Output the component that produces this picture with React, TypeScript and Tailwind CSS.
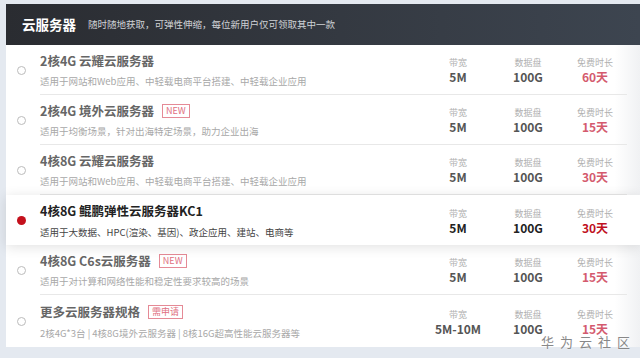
import React from 'react';

interface Plan {
  title: string;
  tag?: string;
  desc: string;
  bw: string;
  disk: string;
  days: string;
  active?: boolean;
}

const plans: Plan[] = [
  { title: '2核4G 云耀云服务器', desc: '适用于网站和Web应用、中轻载电商平台搭建、中轻载企业应用', bw: '5M', disk: '100G', days: '60天' },
  { title: '2核4G 境外云服务器', tag: 'NEW', desc: '适用于均衡场景，针对出海特定场景，助力企业出海', bw: '5M', disk: '100G', days: '15天' },
  { title: '4核8G 云耀云服务器', desc: '适用于网站和Web应用、中轻载电商平台搭建、中轻载企业应用', bw: '5M', disk: '100G', days: '30天' },
  { title: '4核8G 鲲鹏弹性云服务器KC1', desc: '适用于大数据、HPC(渲染、基因)、政企应用、建站、电商等', bw: '5M', disk: '100G', days: '30天', active: true },
  { title: '4核8G C6s云服务器', tag: 'NEW', desc: '适用于对计算和网络性能和稳定性要求较高的场景', bw: '5M', disk: '100G', days: '15天' },
  { title: '更多云服务器规格', tag: '需申请', desc: '2核4G*3台 | 4核8G境外云服务器 | 8核16G超高性能云服务器等', bw: '5M-10M', disk: '100G', days: '15天' },
];

function Stat({ label, value, red, active }: { label: string; value: string; red?: boolean; active?: boolean }) {
  return (
    <div className="flex flex-col items-center leading-none">
      <span className="text-[9px] text-[#b0b0b0]">{label}</span>
      <span
        className={`mt-[4px] text-[12px] font-bold ${
          red ? (active ? 'text-[#c0111f]' : 'text-[#d45a6e]') : active ? 'text-[#222]' : 'text-[#555]'
        }`}
      >
        {value}
      </span>
    </div>
  );
}

function Row({ plan, last }: { plan: Plan; last: boolean }) {
  return (
    <div
      className={`relative flex items-center ${last ? 'h-[52px]' : 'h-[50px]'} ${
        plan.active ? 'z-10 bg-white shadow-[0_2px_12px_rgba(0,0,0,0.12)]' : ''
      }`}
    >
      <div className="flex w-[30px] justify-center">
        {plan.active ? (
          <span className="h-[9px] w-[9px] rounded-full bg-[#c4101c]" />
        ) : (
          <span className="h-[9px] w-[9px] rounded-full border border-[#bbb] bg-white" />
        )}
      </div>
      <div
        className={`ml-[4px] mr-[13px] flex h-full flex-1 items-center ${
          !last && !plan.active ? 'border-b border-[#e8e8e8]' : ''
        }`}
      >
        <div className="flex flex-1 flex-col pt-[1px]">
          <div className="flex items-center">
            <span className={`text-[12.5px] font-bold ${plan.active ? 'text-[#222]' : 'text-[#666]'}`}>{plan.title}</span>
            {plan.tag && (
              <span className="ml-[8px] border border-[#e58a96] px-[3px] text-[9px] leading-[12px] text-[#e0707f]">
                {plan.tag}
              </span>
            )}
          </div>
          <span className={`mt-[4px] text-[9.5px] ${plan.active ? 'text-[#444]' : 'text-[#a8a8a8]'}`}>{plan.desc}</span>
        </div>
        <div className="grid grid-cols-[70px_70px_64px] pt-[2px]">
          <Stat label="带宽" value={plan.bw} active={plan.active} />
          <Stat label="数据盘" value={plan.disk} active={plan.active} />
          <Stat label="免费时长" value={plan.days} red active={plan.active} />
        </div>
      </div>
    </div>
  );
}

export default function App() {
  return (
    <div
      className="h-[358px] w-[640px] overflow-hidden bg-[#e4e9f0] pl-[6px] pt-[4px]"
      style={{ fontFamily: '"Noto Sans CJK SC", "Liberation Sans", sans-serif' }}
    >
      <div className="relative bg-white">
        <div className="flex h-[41px] items-center bg-gradient-to-r from-[#2a2c31] to-[#3d4550] pl-[16px]">
          <span className="text-[13.5px] font-bold text-white">云服务器</span>
          <span className="ml-[12px] text-[9.5px] text-[#cfd2d6]">随时随地获取，可弹性伸缩，每位新用户仅可领取其中一款</span>
        </div>
        <div className="bg-gradient-to-r from-white from-[96%] to-[#f0f1f3]">
          {plans.map((p, i) => (
            <Row key={i} plan={p} last={i === plans.length - 1} />
          ))}
        </div>
        <div className="pointer-events-none absolute bottom-[-3px] right-[4px] text-[13px] leading-[16px] tracking-[6px] text-[#888] [text-shadow:0_0_2px_#fff]">
          华为云社区
        </div>
      </div>
    </div>
  );
}
